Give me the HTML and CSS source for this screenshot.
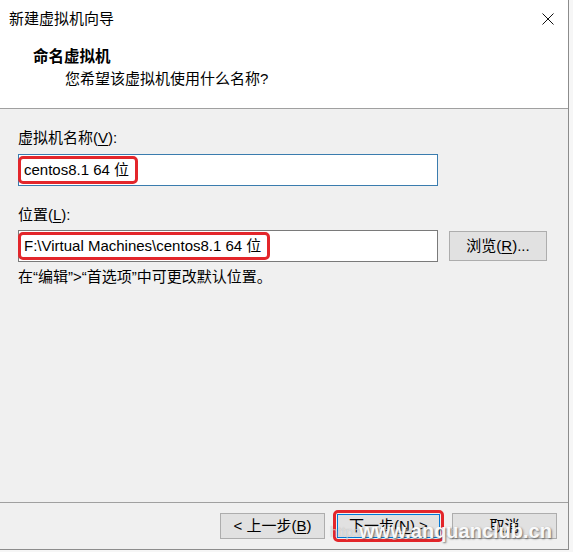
FILE: index.html
```html
<!DOCTYPE html>
<html lang="zh-CN">

<head>
    <meta charset="UTF-8">
    <meta name="viewport" content="width=device-width, initial-scale=1.0">
    <title>新建虚拟机向导</title>
    <link rel="stylesheet" href="styles.css">
</head>

<body>
    <div class="window">
        <!-- 标题栏 -->
        <div class="titlebar">
            <span class="title">新建虚拟机向导</span>
            <svg class="close" width="12" height="12" viewBox="0 0 12 12">
                <path d="M0.5 0.5L11.5 11.5M11.5 0.5L0.5 11.5" stroke="#111" stroke-width="1" fill="none" />
            </svg>
        </div>
        <!-- 页头 -->
        <div class="header">
            <div class="heading">命名虚拟机</div>
            <div class="subheading">您希望该虚拟机使用什么名称?</div>
        </div>
        <!-- 表单 -->
        <div class="body">
            <div class="label">虚拟机名称(<u>V</u>):</div>
            <div class="field focused">
                <span class="mark">centos8.1 64 位</span>
            </div>

            <div class="label second">位置(<u>L</u>):</div>
            <div class="row">
                <div class="field">
                    <span class="mark wide">F:\Virtual Machines\centos8.1 64 位</span>
                </div>
                <div class="btn browse">浏览(<u>R</u>)...</div>
            </div>
            <div class="hint">在“编辑”&gt;“首选项”中可更改默认位置。</div>
        </div>
        <!-- 底部按钮 -->
        <div class="footer">
            <div class="btn">&lt; 上一步(<u>B</u>)</div>
            <div class="next-wrap">
                <div class="btn default">下一步(<u>N</u>) &gt;</div>
            </div>
            <div class="btn">取消</div>
        </div>
        <div class="watermark">
            <span class="wm-faint">https://blog.csdn.net</span>
            <span class="wm-main">www.anquanclub.cn</span>
        </div>
    </div>
</body>

</html>
```

FILE: styles.css
```css
* {
    box-sizing: border-box;
}

body {
    margin: 0;
    background: #f6f6f6;
    font-family: "Liberation Sans", "Noto Sans CJK SC", sans-serif;
    font-size: 15px;
    color: #000;
}

u {
    text-decoration-thickness: 1px;
    text-underline-offset: 2px;
}

.window {
    position: relative;
    width: 569px;
    height: 550px;
    background: #f0f0f0;
    border-right: 1px solid #8c8c8c;
    border-bottom: 1px solid #8c8c8c;
    display: flex;
    flex-direction: column;
}

.titlebar {
    height: 38px;
    background: #fff;
    display: flex;
    align-items: center;
    justify-content: space-between;
    padding: 0 14px 0 9px;
}

.title {
    line-height: 20px;
}

.close {
    display: block;
    margin-top: -1px;
}

/* 页头 */

.header {
    background: #fff;
    height: 71px;
    border-bottom: 1px solid #a0a0a0;
    padding-top: 9px;
}

.heading {
    padding-left: 33px;
    font-weight: bold;
    font-size: 15.5px;
    line-height: 20px;
}

.subheading {
    padding-left: 65px;
    margin-top: 3px;
    line-height: 18px;
}

/* 表单 */

.body {
    flex: 1;
    padding: 21px 0 0 18px;
}

.label {
    line-height: 16px;
    margin-bottom: 8px;
}

.label.second {
    margin-top: 21px;
    margin-bottom: 7px;
}

.field {
    width: 420px;
    height: 32px;
    background: #fff;
    border: 1px solid #7a7a7a;
    display: flex;
    align-items: center;
}

.field.focused {
    border-color: #3a7cae;
}

.mark {
    display: inline-block;
    height: 28px;
    line-height: 22px;
    margin-left: -1px;
    padding: 0 6px 0 3px;
    border: 3px solid #e3262b;
    border-radius: 5px;
    font-size: 15px;
    white-space: nowrap;
}

.row {
    display: flex;
    align-items: center;
    gap: 11px;
}

.btn {
    width: 105px;
    height: 26px;
    background: #e1e1e1;
    border: 1px solid #adadad;
    display: flex;
    align-items: center;
    justify-content: center;
    line-height: 18px;
}

.btn.browse {
    width: 98px;
    height: 30px;
}

.hint {
    margin-top: 7px;
    line-height: 16px;
}

/* 底部 */

.footer {
    height: 47px;
    border-top: 1px solid #a0a0a0;
    display: flex;
    justify-content: flex-end;
    align-items: center;
    gap: 11px;
    padding: 0 11px 0 0;
}

.next-wrap {
    margin: 0 -3px;
    padding: 1px;
    border: 3px solid #e3262b;
    border-radius: 5px;
}

.btn.default {
    width: 103px;
    height: 24px;
    border-color: #0078d7;
}

/* 水印 */

.watermark {
    position: absolute;
    left: 330px;
    top: 520px;
    display: flex;
    align-items: center;
    white-space: nowrap;
}

.wm-faint {
    font-size: 14px;
    color: rgba(255, 255, 255, 0.5);
    text-shadow: 0 0 1px rgba(90, 90, 90, 0.4);
}

.wm-main {
    margin-left: -96px;
    font-size: 20px;
    font-weight: bold;
    color: rgba(255, 255, 255, 0.95);
    text-shadow: 1px 1px 2px rgba(60, 60, 60, 0.7);
}
```
